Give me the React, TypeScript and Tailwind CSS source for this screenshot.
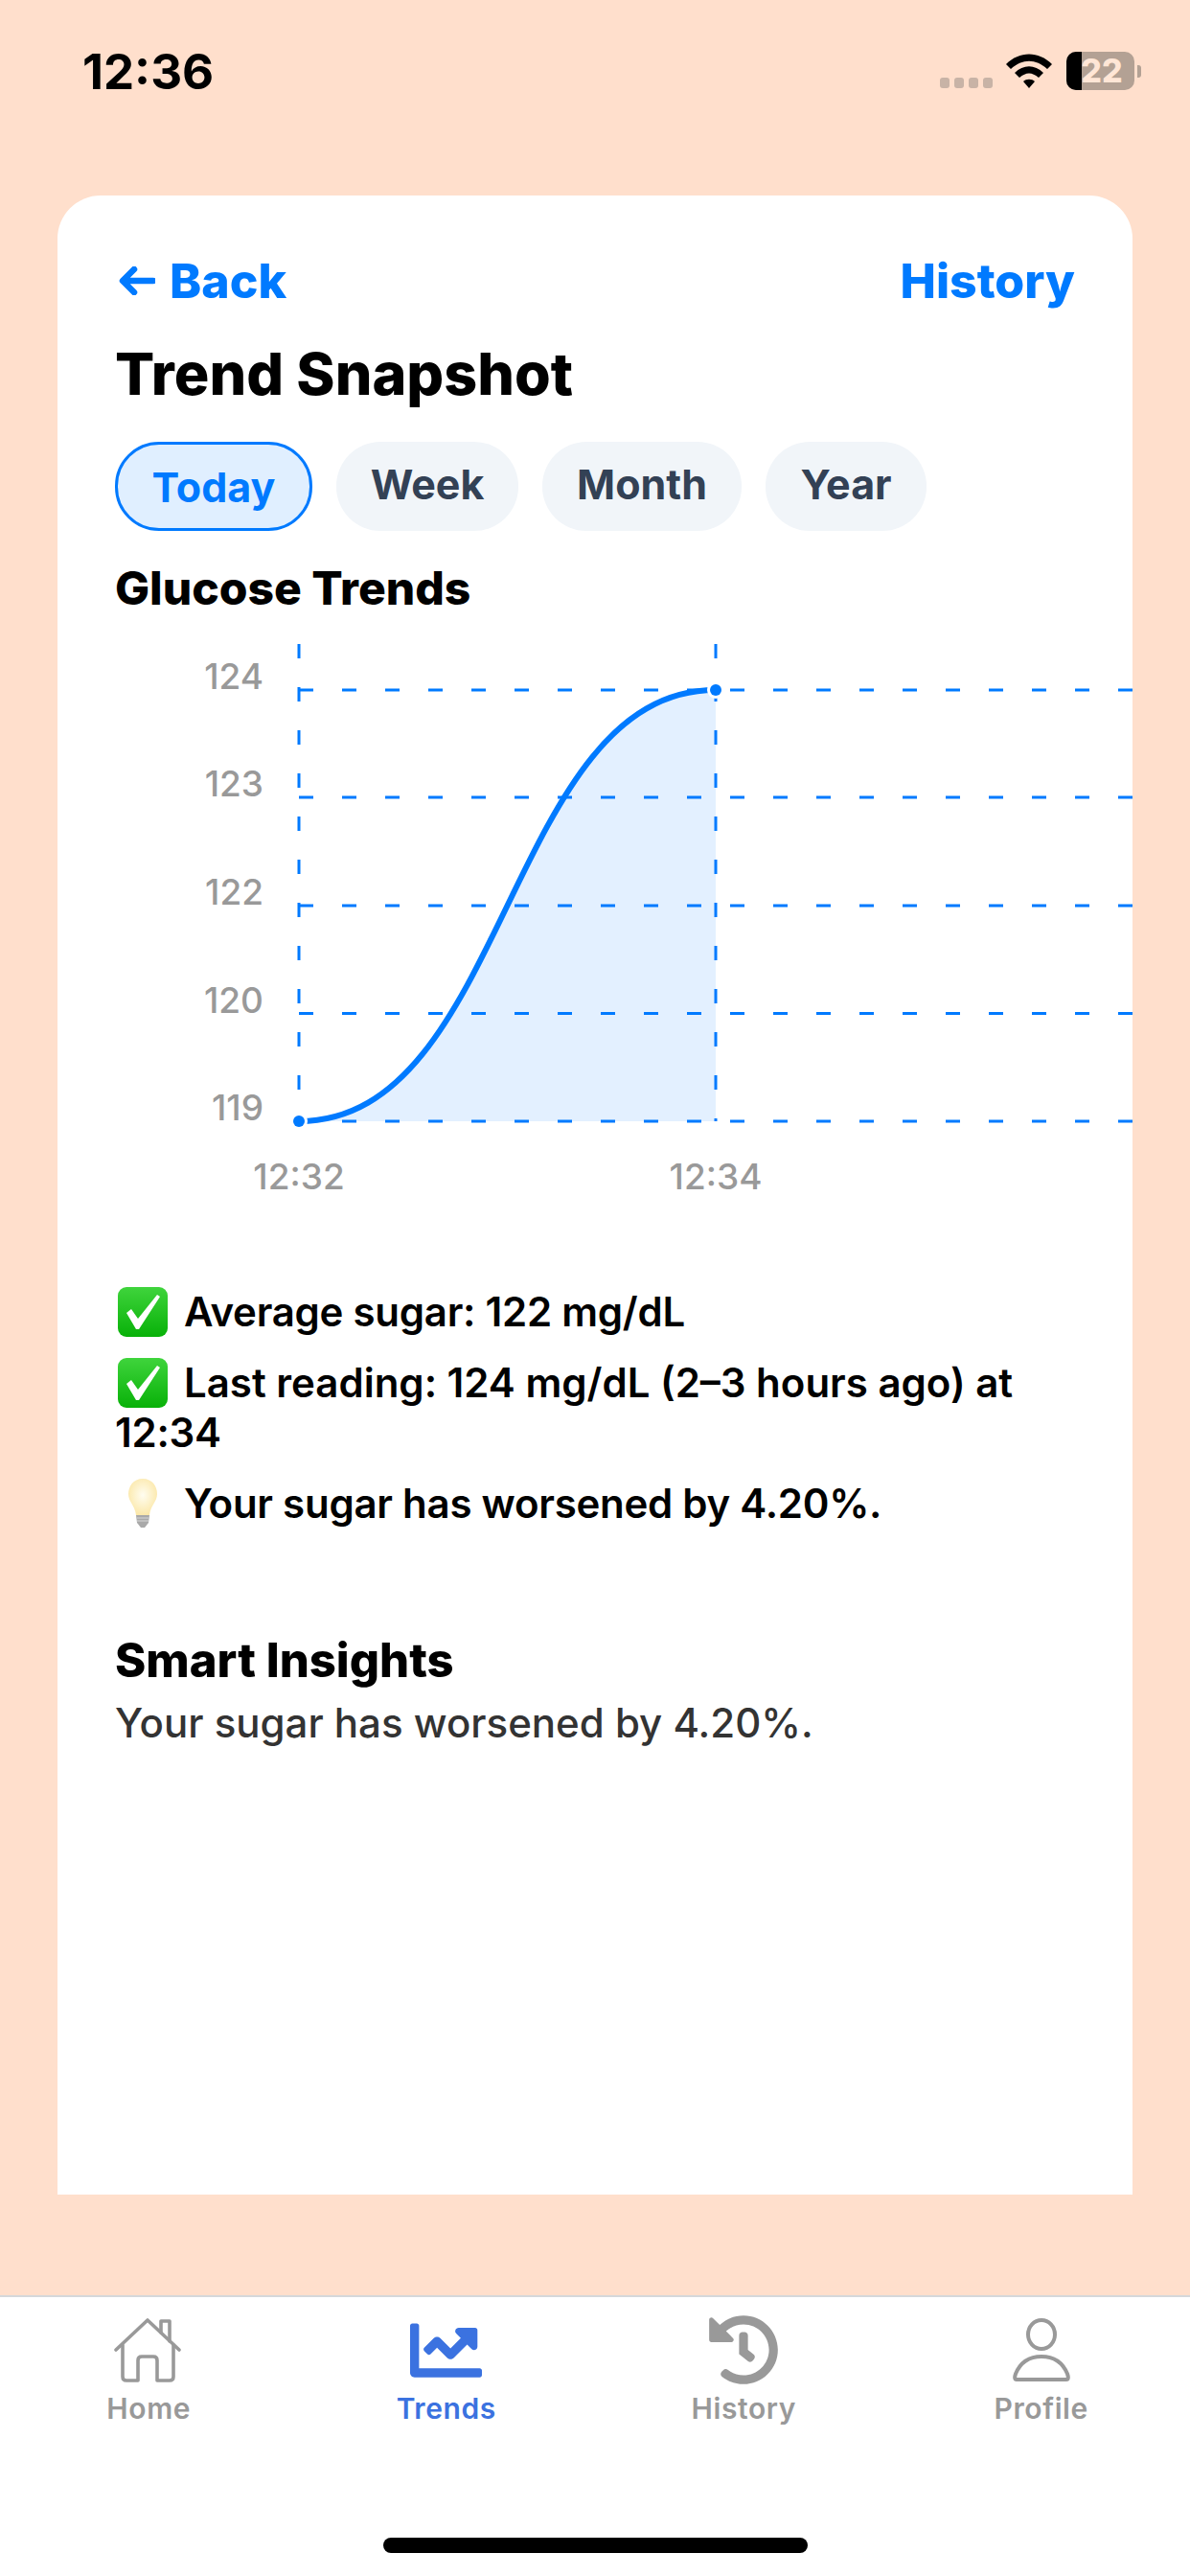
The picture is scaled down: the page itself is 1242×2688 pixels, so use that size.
import { FaChartLine, FaHistory } from "react-icons/fa";

const font = "font-['Inter','Liberation_Sans',sans-serif]";

function Check() {
  return (
    <svg width="52" height="52" viewBox="0 0 52 52" className="shrink-0 ml-[3px]">
      <defs>
        <linearGradient id="g" x1="0" y1="0" x2="0" y2="1">
          <stop offset="0" stopColor="#3fd43c" />
          <stop offset="1" stopColor="#08b108" />
        </linearGradient>
      </defs>
      <rect x="0" y="0" width="52" height="52" rx="9" fill="url(#g)" />
      <path d="M9 27 L14 23 L21 33 L41 8 L44 10 L22 44 L19 44 Z" fill="#fff" />
    </svg>
  );
}

function Bulb() {
  return (
    <svg width="52" height="52" viewBox="0 0 52 52" className="shrink-0 ml-[3px]">
      <defs>
        <radialGradient id="b" cx="0.5" cy="0.45" r="0.6">
          <stop offset="0" stopColor="#fffdf0" />
          <stop offset="1" stopColor="#fbe6a4" />
        </radialGradient>
      </defs>
      <path d="M26 0 C36 0 41 8 41 16 C41 24 34 28 33 38 L19 38 C18 28 11 24 11 16 C11 8 16 0 26 0 Z" fill="url(#b)" />
      <path d="M19 38 L33 38 L32 46 L28 51 L24 51 L20 46 Z" fill="#a9a9a9" />
      <path d="M20 41 L32 41 M20 44 L32 44" stroke="#d8d8d8" strokeWidth="1.2" />
    </svg>
  );
}

function Chart() {
  const ys = [720, 832, 945, 1057.5, 1170];
  const labels = ["124", "123", "122", "120", "119"];
  const ox = 60;
  const oy = 660;
  return (
    <svg width="1122" height="600" viewBox={`${ox} ${oy} 1122 600`} className="block">
      <path d="M312 1170 C529.5 1170 529.5 720 747 720 L747 1170 Z" fill="#e3f0ff" />
      {[312, 747].map((x) => (
        <line key={x} x1={x} x2={x} y1="672" y2="1170" stroke="#007aff" strokeWidth="3" strokeDasharray="15 30" />
      ))}
      {ys.map((y) => (
        <line key={y} x1="312" x2="1182" y1={y} y2={y} stroke="#007aff" strokeWidth="3" strokeDasharray="15 30" />
      ))}
      <path d="M312 1170 C529.5 1170 529.5 720 747 720" fill="none" stroke="#007aff" strokeWidth="6" />
      <circle cx="312" cy="1170" r="9" fill="#fff" />
      <circle cx="747" cy="720" r="9" fill="#fff" />
      <circle cx="312" cy="1170" r="6" fill="#007aff" />
      <circle cx="747" cy="720" r="6" fill="#007aff" />
      {ys.map((y, i) => (
        <text key={y} x="275" y={y - 1} textAnchor="end" fontSize="37" fontWeight="500" fill="#999" fontFamily="Inter, sans-serif">
          {labels[i]}
        </text>
      ))}
      <text x="312" y="1241" textAnchor="middle" fontSize="37" fontWeight="500" fill="#999" fontFamily="Inter, sans-serif">12:32</text>
      <text x="747" y="1241" textAnchor="middle" fontSize="37" fontWeight="500" fill="#999" fontFamily="Inter, sans-serif">12:34</text>
    </svg>
  );
}

function Pill({ label, active, w }: { label: string; active?: boolean; w: string }) {
  return (
    <div
      className={
        active
          ? `${w} h-[93px] pt-[2px] flex items-center justify-center rounded-[46px] border-[3px] border-[#007aff] bg-[#e0efff] text-[#007aff] text-[43px] font-bold`
          : `${w} h-[93px] pb-[4px] flex items-center justify-center rounded-[46px] bg-[#f1f5f9] text-[#334155] text-[43px] font-bold`
      }
    >
      {label}
    </div>
  );
}

function Tab({ label, active, children }: { label: string; active?: boolean; children: React.ReactNode }) {
  return (
    <div className="flex-1 flex flex-col items-center">
      <div className="h-[86px] flex items-center justify-center">{children}</div>
      <div className={active ? "text-[30px] leading-[36px] font-semibold tracking-[0.6px] text-[#3b72e0]" : "text-[30px] leading-[36px] font-semibold tracking-[0.6px] text-[#999999]"}>
        {label}
      </div>
    </div>
  );
}

export default function App() {
  return (
    <div className={`${font} w-[1242px] h-[2688px] bg-[#ffdfcc] flex flex-col overflow-hidden`}>
      <div className="h-[204px] shrink-0 pl-[86px] pr-[51px] pt-[40px] flex justify-between items-start">
        <div className="text-[51px] leading-[70px] font-bold text-black">12:36</div>
        <div className="flex items-start pt-[14px]">
          <div className="flex gap-[5px] mt-[27px] mr-[14px]">
            <div className="w-[10px] h-[11px] rounded-[3px] bg-[#c8b3a6]" />
            <div className="w-[10px] h-[11px] rounded-[3px] bg-[#c8b3a6]" />
            <div className="w-[10px] h-[11px] rounded-[3px] bg-[#c8b3a6]" />
            <div className="w-[10px] h-[11px] rounded-[3px] bg-[#c8b3a6]" />
          </div>
          <svg width="48" height="36" viewBox="0 0 48 36" className="mt-[2px] mr-[15px]">
            <path d="M0 11 C14 -3 34 -3 48 11 L43 16 C31 5 17 5 5 16 Z" fill="#000" />
            <path d="M9 20 C18 11 30 11 39 20 L34 25 C27 19 21 19 14 25 Z" fill="#000" />
            <path d="M18 29 C21 26 27 26 30 29 L24 36 Z" fill="#000" />
          </svg>
          <div className="relative w-[71px] h-[40px] rounded-[10px] bg-[#b3a194] overflow-hidden">
            <div className="absolute left-0 top-0 bottom-0 w-[16px] bg-black" />
            <div className="absolute inset-0 flex items-center justify-center pl-[3px] text-[34px] font-extrabold leading-[40px] text-[#ffe6d6]">22</div>
          </div>
          <div className="w-[4px] h-[13px] mt-[14px] ml-[3px] rounded-r-[3px] bg-[#b3a194]" />
        </div>
      </div>

      <div className="mx-[60px] h-[2086px] shrink-0 bg-white rounded-t-[45px] flex flex-col">
        <div className="px-[60px] pt-[62px] flex justify-between items-center h-[116px] text-[#007aff] text-[50px] font-extrabold">
          <div className="flex items-center gap-[15px] pl-[4px]">
            <svg width="38" height="30" viewBox="0 0 38 30">
              <path d="M16 3 L4 15 L16 27 M5 15 L36 15" fill="none" stroke="#007aff" strokeWidth="6.5" strokeLinecap="round" strokeLinejoin="round" />
            </svg>
            <span>Back</span>
          </div>
          <span>History</span>
        </div>
        <h1 className="px-[60px] mt-[35px] text-[61px] leading-[70px] font-extrabold text-black">Trend Snapshot</h1>
        <div className="px-[60px] mt-[36px] flex gap-[25px]">
          <Pill label="Today" active w="w-[206px]" />
          <Pill label="Week" w="w-[190px]" />
          <Pill label="Month" w="w-[208px]" />
          <Pill label="Year" w="w-[168px]" />
        </div>
        <h2 className="px-[60px] mt-[32px] text-[48px] leading-[56px] font-extrabold text-black">Glucose Trends</h2>
        <div className="mt-[18px]">
          <Chart />
        </div>
        <div className="px-[60px] mt-[83px] text-[42px] leading-[52px] font-semibold tracking-[-0.25px] text-black">
          <div className="flex items-center gap-[17px]">
            <Check />
            <span>Average sugar: 122 mg/dL</span>
          </div>
          <div className="mt-[22px]">
            <div className="flex items-center gap-[17px]">
              <Check />
              <span className="whitespace-nowrap tracking-[0px]">Last reading: 124 mg/dL (2–3 hours ago) at</span>
            </div>
            <div>12:34</div>
          </div>
          <div className="mt-[22px] flex items-center gap-[17px]">
            <Bulb />
            <span>Your sugar has worsened by 4.20%.</span>
          </div>
        </div>
        <h2 className="px-[60px] mt-[110px] text-[49px] leading-[56px] font-extrabold text-black">Smart Insights</h2>
        <p className="px-[60px] mt-[11px] text-[42px] leading-[52px] font-medium text-[#333]">Your sugar has worsened by 4.20%.</p>
      </div>

      <div className="mt-[105px] flex-1 bg-white border-t-[2px] border-[#d5d8da] flex flex-col">
        <div className="flex pt-[12px]">
          <Tab label="Home">
            <svg width="72" height="68" viewBox="0 0 72 68" fill="none" stroke="#999" strokeWidth="3.6" strokeLinecap="round" strokeLinejoin="round">
              <path d="M2 34 L35 3 L68 34" />
              <path d="M49 16 L49 4 L58 4 L58 25" />
              <path d="M9 29 L9 62 Q9 66 13 66 L25 66 L25 45 Q25 41 29 41 L41 41 Q45 41 45 45 L45 66 L58 66 Q62 66 62 62 L62 29" />
            </svg>
          </Tab>
          <Tab label="Trends" active>
            <FaChartLine size={75} color="#3b72e0" />
          </Tab>
          <Tab label="History">
            <FaHistory size={74} color="#999" />
          </Tab>
          <Tab label="Profile">
            <svg width="60" height="66" viewBox="0 0 60 66" fill="none" stroke="#999" strokeWidth="4" strokeLinejoin="round">
              <ellipse cx="30" cy="17" rx="14" ry="15" />
              <path d="M4 64 Q1 64 3 58 C8 46 18 40 30 40 C42 40 52 46 57 58 Q59 64 56 64 Z" />
            </svg>
          </Tab>
        </div>
        <div className="mt-auto mb-[24px] mx-auto w-[443px] h-[16px] rounded-full bg-black" />
      </div>
    </div>
  );
}
